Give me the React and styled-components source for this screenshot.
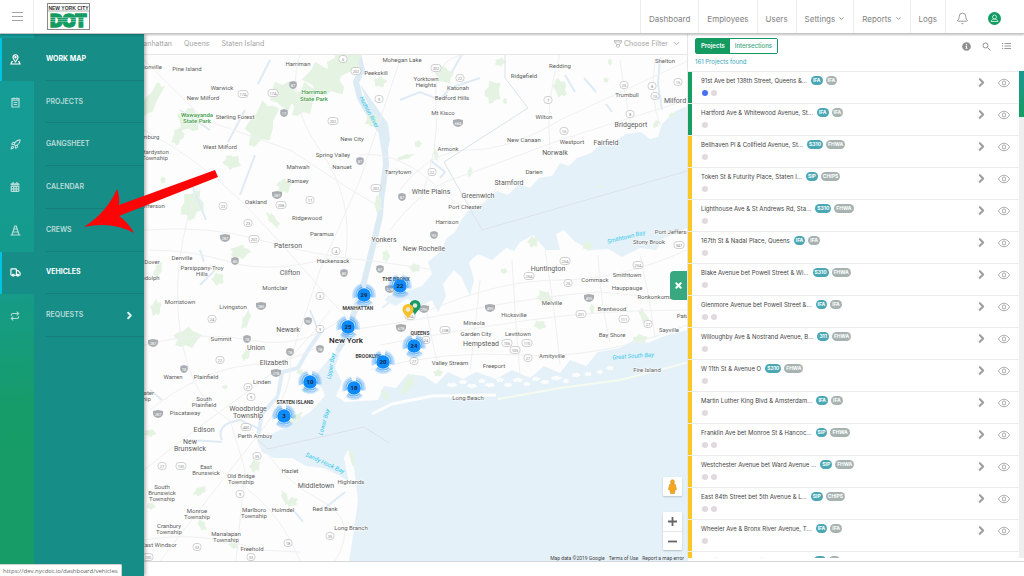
import React, { useState } from 'react';
import styled, { createGlobalStyle } from 'styled-components';
import { Bell, ChevronDown, ChevronRight, Repeat, Rocket, Truck, X } from 'lucide-react';
import { FaCalendarAlt, FaInfoCircle } from 'react-icons/fa';

const GlobalStyle = createGlobalStyle`
  * {
    box-sizing: border-box;
  }
  body {
    margin: 0;
    background: white;
    color: #555;
    font-family: Inter, "Open Sans", sans-serif;
    font-size: 6px;
    line-height: 8px;
  }
  button, select {
    font: inherit;
    color: inherit;
    background: none;
    border: none;
    padding: 0;
    margin: 0;
    cursor: pointer;
  }
  a {
    color: inherit;
    text-decoration: none;
  }
  svg {
    display: block;
  }
`;

const Page = styled.div`
  display: flex;
  flex-direction: column;
  height: 100vh;
  overflow: hidden;
  position: relative;
`;

const Header = styled.header`
  display: flex;
  align-items: stretch;
  flex: 0 0 34px;
  background: white;
  border-bottom: 1px solid #c6c6c6;
  box-shadow: 0 1px 2px rgba(0, 0, 0, 0.25);
  position: relative;
  z-index: 3;
`;

const MenuButton = styled.button`
  display: flex;
  flex-direction: column;
  justify-content: center;
  align-items: center;
  gap: 3px;
  width: 34px;
  padding-left: 2px;
  border-right: 1px solid #ececec;
  span {
    width: 11px;
    height: 1px;
    background: #a5a5a5;
  }
`;

const LogoLink = styled.a`
  padding: 3px 0 0 13px;
  margin-right: auto;
`;

const TopNav = styled.nav`
  display: flex;
  color: #828282;
  font-size: 8px;
`;

const TopNavItem = styled.a`
  display: flex;
  align-items: center;
  justify-content: center;
  gap: 3px;
  padding: 4px 8px 0;
  border-left: 1px solid #ececec;
`;

const HeaderActions = styled.div`
  display: flex;
  align-items: center;
  gap: 19px;
  padding: 4px 23px 0 10px;
  border-left: 1px solid #ececec;
  color: #828282;
`;

const Body = styled.div`
  display: flex;
  flex: 1;
  min-height: 0;
  padding-left: 34px;
  padding-bottom: 14px;
`;

const SideNav = styled.nav`
  position: absolute;
  z-index: 2;
  top: 34px;
  bottom: 0;
  left: 0;
  width: 144px;
  padding-top: 4px;
  background:
    linear-gradient(#168d87, #168d87) 34px 0 no-repeat,
    linear-gradient(175deg, #159c99 0%, #159b8b 45%, #169c68 68%, #179c66 100%);
  box-shadow: 1px 0 4px rgba(0, 0, 0, 0.4);
`;

const SideList = styled.ul`
  display: grid;
  grid-template-rows: repeat(7, 1fr);
  height: 299px;
  margin: 0;
  padding: 0;
  list-style: none;
  li {
    display: grid;
  }
`;

const SideLink = styled.a`
  display: grid;
  grid-template-columns: 32px 1fr;
  border-left: 2px solid ${({ $active }) => ($active ? '#00c3e3' : 'transparent')};
  background: ${({ $active }) => ($active ? '#168d87' : 'none')};
  color: ${({ $active }) => ($active ? 'white' : '#b9dcd9')};
  font-size: 7px;
  font-weight: ${({ $active }) => ($active ? 700 : 600)};
`;

const SideIcon = styled.span`
  display: flex;
  align-items: center;
  padding-left: 8px;
`;

const SideLabel = styled.span`
  display: flex;
  align-items: center;
  justify-content: space-between;
  margin-left: 12px;
  padding-right: 9px;
  border-bottom: 1px solid #147f7b;
`;

const MapColumn = styled.main`
  display: flex;
  flex-direction: column;
  flex: 1;
  min-width: 0;
  border-bottom: 1px solid #d5d8db;
`;

const MapBar = styled.div`
  display: flex;
  align-items: center;
  flex: 0 0 21px;
  gap: 12px;
  padding: 0 6px 1px 103px;
  border-bottom: 1px solid #e6e6e6;
  color: #a3a3a3;
  font-size: 7px;
`;

const Filter = styled.label`
  display: flex;
  align-items: center;
  gap: 2px;
  margin-left: auto;
  select {
    appearance: none;
    width: 46px;
    outline: none;
  }
`;

const MapCanvas = styled.div`
  position: relative;
  flex: 1;
  overflow: hidden;
  background: #fdfdfd;
`;

const MapSvg = styled.svg`
  width: 100%;
  height: 100%;
  font-family: Roboto, sans-serif;
`;

const Cluster = styled.button`
  position: absolute;
  left: ${({ $x }) => $x - 46}px;
  top: ${({ $y }) => $y - 67}px;
  display: grid;
  place-items: center;
  width: 24px;
  height: 24px;
  color: #14233b;
  font-family: Roboto, sans-serif;
  font-size: 6px;
  font-weight: 700;
  svg, span {
    grid-area: 1 / 1;
  }
`;

const Pin = styled.button`
  position: absolute;
  left: ${({ $x }) => $x - 40}px;
  top: ${({ $y }) => $y - 69}px;
  width: 12px;
  height: 15px;
`;

const MapControls = styled.div`
  position: absolute;
  right: 5px;
  bottom: 11px;
  display: flex;
  flex-direction: column;
  gap: 16px;
`;

const ControlGroup = styled.div`
  display: flex;
  flex-direction: column;
  width: 19px;
  background: white;
  border-radius: 1px;
  box-shadow: 0 1px 2px rgba(0, 0, 0, 0.2);
`;

const ControlButton = styled.button`
  display: grid;
  place-items: center;
  height: 19px;
  & + & {
    border-top: 1px solid #e8e8e8;
  }
`;

const Attribution = styled.div`
  position: absolute;
  right: 3px;
  bottom: 0;
  display: flex;
  gap: 4px;
  color: #444;
  font-family: Roboto, sans-serif;
  font-size: 5px;
  line-height: 6px;
`;

const PanelToggle = styled.button`
  position: absolute;
  right: 0;
  top: 216px;
  display: grid;
  place-items: center;
  width: 17px;
  height: 29px;
  border-radius: 4px 0 0 4px;
  background: #37a880;
  color: white;
`;

const Panel = styled.aside`
  display: flex;
  flex-direction: column;
  flex: 0 0 337px;
  min-height: 0;
  padding-bottom: 3px;
  border-left: 1px solid #e6e6e6;
  border-bottom: 1px solid #d5d8db;
`;

const PanelHead = styled.div`
  display: flex;
  justify-content: space-between;
  padding: 4px 13px 0 7px;
`;

const Switch = styled.div`
  display: flex;
  height: 16px;
  border: 1px solid #139b62;
  border-radius: 2px;
`;

const SwitchButton = styled.button`
  padding: 0 5px;
  background: ${({ $on }) => ($on ? '#139b62' : 'white')};
  color: ${({ $on }) => ($on ? 'white' : '#3aa97b')};
  font-weight: ${({ $on }) => ($on ? 600 : 500)};
`;

const PanelTools = styled.div`
  display: flex;
  align-items: center;
  gap: 11px;
  color: #8f8f8f;
`;

const Found = styled.p`
  margin: 4px 0 5px;
  padding-left: 7px;
  color: #35a8bd;
`;

const ListArea = styled.div`
  display: flex;
  flex: 1;
  min-height: 0;
`;

const ProjectList = styled.ul`
  flex: 1;
  margin: 0;
  padding: 0;
  list-style: none;
  overflow: hidden;
  border-top: 1px solid #ebebeb;
`;

const Row = styled.li`
  display: flex;
  align-items: flex-start;
  height: 32px;
  border-bottom: 1px solid #ececec;
  background: linear-gradient(${({ $color }) => $color}, ${({ $color }) => $color}) 0 0 / 4px 31px no-repeat;
`;

const RowMain = styled.div`
  flex: 1;
  padding: 4px 0 0 13px;
`;

const RowTitle = styled.div`
  display: flex;
  align-items: center;
  gap: 3px;
  height: 9px;
  color: #444;
  a {
    margin-right: 1px;
  }
`;

const Tag = styled.span`
  padding: 0 2px;
  border-radius: 5px;
  background: ${({ $grey }) => ($grey ? '#a7b3b0' : '#4ba7b4')};
  color: white;
  font-size: 5px;
  font-weight: 700;
  line-height: 9px;
`;

const Dots = styled.div`
  display: flex;
  gap: 3px;
  padding: 5px 0 0 1px;
`;

const Dot = styled.span`
  width: 6px;
  height: 6px;
  border-radius: 50%;
  background: ${({ $blue }) => ($blue ? '#4673f5' : '#e0d9dd')};
`;

const RowActions = styled.div`
  display: flex;
  align-items: center;
  gap: 10px;
  padding: 4px 9px 0 0;
  color: #a0a0a0;
`;

const ScrollTrack = styled.div`
  width: 5px;
  background: #efefef;
`;

const ScrollThumb = styled.div`
  height: 46px;
  background: linear-gradient(#169a94, #179d62);
`;

const StatusBar = styled.div`
  position: absolute;
  z-index: 4;
  left: 0;
  bottom: 0;
  padding: 2px 3px 1px;
  background: white;
  border: 1px solid #d0d0d0;
  border-width: 1px 1px 0 0;
  border-radius: 0 2px 0 0;
  color: #666;
  font-family: "Open Sans", sans-serif;
  font-size: 6px;
`;

const Arrow = styled.svg`
  position: absolute;
  z-index: 4;
  left: 84px;
  top: 169px;
  pointer-events: none;
`;

const Logo = () => (
  <svg width="44" height="27" viewBox="0 0 44 27" role="img" aria-label="New York City DOT">
    <rect x="0.5" y="0.5" width="42" height="26" fill="#fff" stroke="#8a8a8a" />
    <path d="M1 8H42" stroke="#777" strokeWidth="0.6" />
    <text x="21.5" y="6.500" textAnchor="middle" fontSize="5" fontWeight="700" fill="#333" fontFamily="Liberation Sans Narrow, Liberation Sans, sans-serif">NEW YORK CITY</text>
    <text x="21.5" y="23.500" textAnchor="middle" fontSize="17" fontWeight="900" fill="#139b62" stroke="#139b62" strokeWidth="1.500" fontFamily="Inter, sans-serif">DOT</text>
    <path d="M2 14.5H41M2 16.500H41M2 18.5H41" stroke="#fff" strokeWidth="0.5" opacity="0.7" />
  </svg>
);

const MapPinIcon = () => (
  <svg width="11" height="11" viewBox="0 0 22 22" fill="none" stroke="currentColor" strokeWidth="2.4">
    <path d="M11 16C8 12 6 9 6 6.500a5 5 0 0 1 10 0C16 9 14 12 11 16z" />
    <circle cx="11" cy="6.500" r="1.200" />
    <path d="M6 15H4l-2 5h18l-2-5h-2" />
  </svg>
);

const ClipboardIcon = () => (
  <svg width="11" height="11" viewBox="0 0 22 22" fill="none" stroke="currentColor" strokeWidth="2.4">
    <path d="M4 3h14v17H4zM4 6.500h14M8 1v4M14 1v4M7.500 11h7M7.500 15h7" />
  </svg>
);

const ConeIcon = () => (
  <svg width="11" height="11" viewBox="0 0 22 22" fill="none" stroke="currentColor" strokeWidth="2.4">
    <path d="M1 20h20M4 20L9.500 2h3L18 20M8 8h6M6 14h10" />
  </svg>
);

const UserIcon = () => (
  <svg width="13" height="13" viewBox="0 0 26 26">
    <circle cx="13" cy="13" r="13" fill="#139b62" />
    <g fill="none" stroke="#c9efdd" strokeWidth="1.800">
      <circle cx="13" cy="10" r="4" />
      <path d="M6 19c1-4 4-4.500 7-4.500s6 .5 7 4.500z" />
    </g>
  </svg>
);

const FilterIcon = () => (
  <svg width="8" height="8" viewBox="0 0 16 16" fill="none" stroke="currentColor" strokeWidth="1.300">
    <path d="M1 1h14v3l-4 5v4l-3 2-3-2V9L1 4zM1 4h14M5 9h6" />
  </svg>
);

const SearchIcon = () => (
  <svg width="9" height="9" viewBox="0 0 18 18" fill="none" stroke="currentColor" strokeWidth="2">
    <circle cx="7" cy="7" r="5" />
    <path d="M11 11l6 6" />
  </svg>
);

const ListIcon = () => (
  <svg width="9" height="8" viewBox="0 0 18 16" fill="none" stroke="currentColor" strokeWidth="1.800">
    <path d="M5 3h13M5 8h13M5 13h13M0 3h2.500M0 8h2.500M0 13h2.500" />
  </svg>
);

const EyeIcon = () => (
  <svg width="12" height="10" viewBox="0 0 24 20" fill="none" stroke="currentColor" strokeWidth="1.800">
    <path d="M1 10c5-10 17-10 22 0-5 10-17 10-22 0z" />
    <ellipse cx="12" cy="10" rx="3.200" ry="4.200" />
  </svg>
);

const Pegman = () => (
  <svg width="9" height="15" viewBox="0 0 18 30" fill="#f5a81c" stroke="#c9821a">
    <path d="M3 12c0-2 3-3 6-3s6 1 6 3l2 9-3 1-1 7H5l-1-7-3-1z" />
    <circle cx="9" cy="5.500" r="4" />
  </svg>
);

const PinShape = ({ color }) => (
  <svg width="12" height="15" viewBox="0 0 24 30">
    <path d="M12 30C9 22 1 19 1 11a11 11 0 0 1 22 0c0 8-8 11-11 19z" fill={color} />
    <circle cx="12" cy="11" r="4.500" fill="#e8e8df" />
  </svg>
);

const ClusterRings = () => (
  <svg width="24" height="24" viewBox="-12 -12 24 24">
    <g fill="none" stroke="#2a94f7" strokeWidth="1.600">
      <circle r="8" opacity="0.65" strokeDasharray="13 3.750" strokeDashoffset="-6" />
      <circle r="9.800" opacity="0.4" strokeDasharray="16 4.500" strokeDashoffset="-7" />
      <circle r="11.200" opacity="0.2" strokeDasharray="18 5.450" strokeDashoffset="-8" />
    </g>
    <circle r="6.800" fill="#0d8bfb" />
  </svg>
);

const menu = [
  { label: 'WORK MAP', icon: <MapPinIcon />, active: true },
  { label: 'PROJECTS', icon: <ClipboardIcon /> },
  { label: 'GANGSHEET', icon: <Rocket size={11} strokeWidth={2.5} /> },
  { label: 'CALENDAR', icon: <FaCalendarAlt size={10} /> },
  { label: 'CREWS', icon: <ConeIcon /> },
  { label: 'VEHICLES', icon: <Truck size={11} strokeWidth={2.5} />, active: true },
  { label: 'REQUESTS', icon: <Repeat size={10} strokeWidth={2.5} />, more: true },
];

const GREEN = '#179c62';
const YELLOW = '#fcc624';

const projects = [
  ['91st Ave bet 138th Street, Queens &...', 'IFA', 'IFA', 2],
  ['Hartford Ave & Whitewood Avenue, St...', 'IFA', 'IFA', 1],
  ['Bellhaven Pl & Collfield Avenue, St...', 'S310', 'FHWA', 1],
  ['Token St & Futurity Place, Staten I...', 'SIP', 'CHIPS', 1],
  ['Lighthouse Ave & St Andrews Rd, Sta...', 'S310', 'FHWA', 1],
  ['167th St & Nadal Place, Queens', 'IFA', 'IFA', 1],
  ['Blake Avenue bet Powell Street & Wi...', 'S310', 'FHWA', 1],
  ['Glenmore Avenue bet Powell Street &...', 'IFA', 'IFA', 2],
  ['Willoughby Ave & Nostrand Avenue, B...', '311', 'FHWA', 1],
  ['W 11th St & Avenue O', 'S310', 'FHWA', 1],
  ['Martin Luther King Blvd & Amsterdam...', 'IFA', 'IFA', 1],
  ['Franklin Ave bet Monroe St & Hancoc...', 'SIP', 'FHWA', 2],
  ['Westchester Avenue bet Ward Avenue ...', 'SIP', 'FHWA', 2],
  ['East 84th Street bet 5th Avenue & L...', 'SIP', 'CHIPS', 2],
  ['Wheeler Ave & Bronx River Avenue, T...', 'IFA', 'IFA', 1],
  ['Morris Park Ave & Unionport Road, B...', 'IFA', 'IFA', 1],
];

const clusters = [
  [364, 295, 29], [400, 286, 22], [348, 327, 25], [414, 346, 24],
  [383, 362, 20], [354, 388, 18], [310, 382, 10], [284, 416, 3],
];

// x, y of the middle of the first line, then the lines
const towns = [
  [187, 69, 'Pine Island'], [298, 64, 'Harriman'], [222, 88, 'Warwick'], [203, 98, 'New Milford'],
  [235, 117, 'Sterling Forest'], [220, 147, 'West Milford'], [333, 155, 'Spring Valley'],
  [298, 167, 'Mahwah'], [342, 167, 'Nanuet'], [298, 181, 'Ramsey'], [256, 202, 'Oakland'],
  [307, 218, 'Ridgewood'], [322, 234, 'Paramus'], [333, 261, 'Hackensack'], [275, 288, 'Montclair'],
  [182, 258, 'Denville'], [152, 262, 'Dover'], [202, 268, 'Parsippany-Troy', 'Hills'],
  [180, 302, 'Morristown'], [233, 307, 'Livingston'], [221, 339, 'Summit'], [173, 377, 'Warren'],
  [206, 377, 'Plainfield'], [262, 382, 'Linden'], [204, 399, 'South', 'Plainfield'],
  [185, 413, 'Piscataway'], [255, 436, 'Perth Amboy'], [206, 467, 'East', 'Brunswick'],
  [241, 476, 'Old Bridge', 'Township'], [290, 471, 'Hazlet'], [162, 487, 'South', 'Brunswick', 'Township'],
  [197, 511, 'Monroe', 'Township'], [254, 510, 'Marlboro', 'Township'], [283, 510, 'Holmdel'],
  [325, 509, 'Red Bank'], [169, 526, 'Cranbury', 'Township'], [159, 545, 'East Windsor'],
  [226, 534, 'Manalapan', 'Township'], [252, 549, 'Freehold'], [351, 482, 'Highlands'],
  [351, 528, 'Long Branch'], [402, 60, 'Mohegan Lake'], [376, 73, 'Peekskill'],
  [426, 79, 'Yorktown', 'Heights'], [458, 88, 'Katonah'], [452, 98, 'Bedford Hills'],
  [443, 113, 'Mt Kisco'], [560, 66, 'Redding'], [524, 76, 'Ridgefield'], [665, 61, 'Shelton'],
  [627, 95, 'Trumbull'], [544, 117, 'Wilton'], [352, 139, 'New City'], [524, 140, 'New Canaan'],
  [572, 142, 'Westport'], [448, 149, 'Armonk'], [398, 172, 'Tarrytown'], [534, 172, 'Darien'],
  [465, 207, 'Port Chester'], [447, 222, 'Harrison'], [595, 280, 'Commack'], [627, 275, 'Smithtown'],
  [649, 242, 'Stony Brook'], [674, 232, 'Port Jefferson'], [627, 288, 'Hauppauge'],
  [655, 297, 'Ronkonkoma'], [612, 309, 'Brentwood'], [552, 303, 'Melville'], [514, 315, 'Hicksville'],
  [474, 323, 'Mineola'], [476, 334, 'Garden City'], [518, 334, 'Levittown'], [669, 330, 'Sayville'],
  [612, 335, 'Bay Shore'], [552, 356, 'Amityville'], [450, 363, 'Valley Stream'],
  [494, 366, 'Freeport'], [647, 370, 'Fire Island'], [468, 398, 'Long Beach'],
  [691, 316, 'Patchogue'], [149, 67, 'Unionville'], [147, 137, 'Hamburg'], [155, 152, 'Hardyston', 'Township'],
  [152, 206, 'Jefferson'], [147, 278, 'Randolph'], [138, 393, 'Bridgewater', 'Township'],
  [224, 53, 'Florida'], [282, 53, 'Monroe'],
];

const cities = [
  [288, 246, 'Paterson'], [290, 273, 'Clifton'], [288, 330, 'Newark'], [256, 348, 'Union'],
  [274, 363, 'Elizabeth'], [248, 409, 'Woodbridge', 'Township'], [204, 430, 'Edison'],
  [190, 442, 'New', 'Brunswick'], [316, 486, 'Middletown'], [675, 101, 'Milford'],
  [631, 125, 'Bridgeport'], [606, 143, 'Fairfield'], [555, 153, 'Norwalk'], [431, 192, 'White Plains'],
  [509, 183, 'Stamford'], [478, 196, 'Greenwich'], [384, 240, 'Yonkers'], [424, 249, 'New Rochelle'],
  [548, 269, 'Huntington'], [481, 344, 'Hempstead'],
];

const boroughs = [
  [295, 402, 'STATEN ISLAND'], [358, 308, 'MANHATTAN'], [396, 279, 'THE BRONX'],
  [420, 333, 'QUEENS'], [368, 356, 'BROOKLYN'],
];

// x, y, angle
const waterNames = [
  [369, 112, 62, 'Hudson River'], [626, 237, -14, 'Smithtown Bay'], [633, 356, -4, 'Great South Bay'],
  [331, 366, -80, 'Upper Bay'], [324, 422, -74, 'Lower Bay'], [325, 463, 25, 'Sandy Hook Bay'],
];

const routes = [
  [243, 94, '17A'], [273, 93, '17A'], [333, 121, '202'], [223, 206, '23'], [281, 205, '208'],
  [310, 200, '17'], [248, 223, '23'], [254, 239, '202'], [336, 251, '4'], [320, 296, '3'],
  [212, 319, '24'], [320, 329, '9'], [220, 360, '22'], [248, 387, '27'], [251, 397, '9'],
  [246, 427, '440'], [257, 456, '35'], [162, 466, '27'], [181, 466, '130'], [240, 494, '9'],
  [330, 536, '35'], [288, 543, '18'], [197, 547, '33'], [251, 557, '33'], [148, 557, '130'],
  [343, 59, '6'], [356, 71, '202'], [436, 68, '202'], [460, 78, '22'], [379, 99, '9'],
  [548, 100, '7'], [564, 131, '15'], [624, 85, '25'], [652, 86, '8'], [678, 82, '15'],
  [655, 96, '15'], [630, 114, '8'], [432, 172, '22'], [376, 188, '202'], [679, 245, '347'],
  [565, 261, '25A'], [638, 265, '25A'], [529, 276, '25A'], [568, 283, '25'], [581, 314, '231'],
  [624, 319, '111'], [648, 324, '27'], [445, 330, '25B'], [507, 343, '106'], [527, 343, '110'],
  [515, 350, '105'], [528, 358, '27'], [426, 340, '24'], [414, 361, '27'], [410, 316, '25A'],
];

const interstates = [
  [293, 85, '87'], [284, 113, '17'], [277, 195, '287'], [225, 238, '287'], [235, 261, '80'],
  [261, 306, '280'], [247, 339, '78'], [308, 321, '95'], [290, 352, '78'], [320, 349, '78'],
  [184, 369, '78'], [276, 373, '278'], [153, 343, '287'], [158, 414, '287'], [458, 123, '684'],
  [360, 161, '87'], [402, 197, '87'], [434, 235, '95'], [380, 269, '87'], [344, 273, '80'],
  [390, 289, '278'], [424, 309, '295'], [490, 308, '495'], [589, 298, '495'], [401, 328, '678'],
];

// x, y, width, height, angle
const parks = [
  [325, 80, 48, 34, 20], [345, 62, 40, 30, -20], [262, 124, 30, 54, 25], [285, 95, 34, 30, 30],
  [304, 100, 26, 40, 30], [190, 120, 28, 26, 0], [152, 100, 14, 46, 30], [178, 136, 12, 22, 20],
  [232, 162, 20, 16, 0], [192, 205, 24, 34, 20], [273, 220, 22, 8, 50], [240, 252, 22, 15, 0],
  [218, 279, 14, 14, 0], [187, 338, 30, 22, -10], [156, 308, 12, 18, 10], [158, 270, 8, 20, 20],
  [246, 320, 8, 22, 20], [246, 355, 8, 14, 30], [284, 186, 16, 16, 10], [150, 433, 14, 8, 0],
  [200, 491, 16, 9, -30], [151, 506, 10, 8, 0], [202, 525, 14, 8, 60], [255, 466, 12, 14, 20],
  [285, 498, 6, 18, -20], [234, 545, 12, 8, 20], [292, 502, 10, 14, 60], [493, 92, 18, 26, 10],
  [560, 88, 14, 22, -20], [500, 62, 12, 9, -20], [380, 82, 14, 12, 0], [444, 75, 22, 18, 30],
  [418, 144, 8, 8, 0], [372, 120, 14, 16, 50], [405, 157, 20, 5, -15], [378, 204, 8, 20, 0],
  [386, 256, 8, 14, 0], [415, 268, 12, 10, 0], [436, 155, 5, 14, -10], [533, 242, 12, 12, 0],
  [588, 246, 12, 10, 0], [545, 298, 20, 14, 50], [540, 325, 14, 10, 10], [592, 309, 5, 12, 0],
  [644, 317, 8, 22, -25], [640, 339, 16, 10, 0], [504, 271, 8, 6, 0], [408, 385, 10, 26, 30],
  [385, 395, 6, 16, -25], [438, 373, 10, 8, 0], [305, 389, 8, 8, 0], [296, 418, 18, 7, -40],
  [300, 372, 8, 6, 0], [352, 458, 5, 22, -15], [610, 62, 5, 8, 0], [606, 80, 6, 6, 0],
  [656, 124, 10, 6, -60], [672, 115, 8, 5, -30], [505, 101, 5, 7, 0], [600, 187, 6, 4, 0],
  [470, 172, 5, 12, 10], [225, 387, 7, 5, 0], [163, 180, 6, 8, 0],
];

// marsh islands behind the barrier beach
const islets = [
  [452, 385, 12], [463, 382, 9], [472, 386, 12], [482, 381, 8], [490, 385, 12], [500, 380, 9],
  [508, 385, 10], [518, 380, 12], [527, 384, 8], [536, 379, 9], [545, 382, 10], [556, 378, 12],
  [566, 381, 7], [576, 375, 10], [588, 374, 8], [600, 372, 7], [610, 368, 8],
];

const roads = [
  'M144 60L205 120 290 150 345 186 383 209',
  'M144 130Q200 160 240 200T330 300L360 330',
  'M144 230Q210 225 260 240T380 262L435 270',
  'M150 250Q190 250 230 262T330 258',
  'M144 345Q200 330 250 340T340 320',
  'M150 410Q200 370 250 365T320 345',
  'M144 470Q200 425 250 390T330 310',
  'M160 561Q230 470 262 430T290 360L320 270 360 180 400 60',
  'M300 54Q285 100 320 150T345 260',
  'M220 470Q270 500 290 540T300 561',
  'M260 440Q280 480 320 500T335 561',
  'M144 540Q200 530 260 550L300 552',
  'M390 230Q420 190 450 180T560 140L687 100',
  'M400 190Q430 150 470 150T560 120L690 60',
  'M360 155Q400 150 440 190T500 180',
  'M420 200Q440 150 436 100T480 54',
  'M350 330Q420 320 480 308T600 292L687 300',
  'M380 345Q460 330 530 320T687 310',
  'M370 370Q440 350 520 355T687 325',
  'M430 310Q500 280 560 280T687 250',
  'M440 370Q430 340 424 290',
  'M470 370Q475 330 480 280M520 375Q515 320 512 260M560 365Q555 310 545 250M610 342Q600 300 598 255M655 338Q650 300 640 255',
  'M560 54Q545 100 550 150M620 60Q625 100 632 128M655 60Q650 100 660 125',
  'M200 180Q170 260 180 330T230 420L245 470 236 561',
];

const streams = [
  'M270 60L258 84M245 110L228 142M255 155L240 195M210 130L180 110M200 250L204 262M206 220L190 180',
  'M400 100L420 92 440 100 450 88 480 78M430 160L445 172 440 178M462 54L452 72',
  'M565 75L575 92M584 78L596 92M660 58L658 84 662 110M606 104L612 112',
  'M222 440Q215 424 240 420L262 430M190 440L222 442M200 285L215 270M162 400L150 390',
  'M325 508L345 492M303 522L295 512M310 310L318 330',
];

const textLines = ([x, y, ...lines], step) =>
  lines.map((line, i) => <text key={line + i} x={x} y={y + 2 + i * step}>{line}</text>);

// uneven outline, so that a park does not look like an ellipse
const blobPoints = (w, h, seed) =>
  Array.from({ length: 14 }, (_, i) => {
    const a = (i / 14) * Math.PI * 2;
    const k = 0.42 + 0.1 * Math.sin(seed * 3 + i * 2.3);
    return `${(Math.cos(a) * w * k).toFixed(1)},${(Math.sin(a) * h * k).toFixed(1)}`;
  }).join(' ');

const RegionMap = () => (
  <MapSvg role="img" aria-label="Map of New York and surroundings">
    <g transform="translate(-34 -55)">
      <path d="M1400 106H687L674 112 662 124 658 137 650 139 641 132 626 134 614 142 601 144 591 153 577 158 569 166 560 163 552 176 539 178 530 188 519 184 508 195 497 191 483 203 471 207 462 219 455 232 447 238 440 252 428 262 432 274 422 286 404 292 388 296 370 318 352 338 338 350 328 360 318 372 312 384 322 388 325 396 310 412 292 424 268 436 256 438 262 452 274 458 292 458 306 466 324 468 340 476 349 482 344 458 348 450 354 468 358 500 354 530 349 561V1200H1400Z" fill="#e4f1f9" />
      <path d="M358 54L362 70 356 82 360 98 374 122 384 134 386 165 381 200 380 216 372 250 362 290 348 330 338 352" fill="none" stroke="#dceaf4" strokeWidth="6" />
      <path d="M360 84Q372 100 388 124L390 140 384 165 378 130Z" fill="#deecf6" />
      <path d="M322 330L308 350 298 368 282 372 278 396 262 414 258 436" fill="none" stroke="#e0edf6" strokeWidth="4" />
      <g fill="#fdfdfd">
        <path d="M340 352L352 334 368 312 384 300 396 306 408 298 420 306 432 300 438 312 446 296 443 284 454 270 462 278 470 296 474 280 469 262 478 254 492 260 506 248 514 251 520 242 533 235 546 250 560 250 556 234 564 230 574 241 590 250 608 249 622 257 640 248 656 250 664 238 687 228H1400V320H700L687 330 664 336 648 343 636 339 620 348 598 352 586 366 570 360 560 373 544 366 530 378 512 370 496 379 476 372 463 379 448 372 436 384 424 376 408 374 396 388 384 386 378 400 345 402 336 396 342 382 335 368Z" />
        <path d="M284 380L300 376 318 384 324 392 310 408 292 422 268 434 278 400Z" />
        {islets.map(([x, y, w], i) => (
          <polygon key={x} points={blobPoints(w, 5, i)} transform={`translate(${x} ${y})`} />
        ))}
      </g>
      <path d="M372 414L392 404 432 396 496 395" fill="none" stroke="#fdfdfd" strokeWidth="3" />
      <path d="M498 399L560 388 620 380 690 362" fill="none" stroke="#f6faef" strokeWidth="2" />
      <path d="M382 308L400 294 412 300" fill="none" stroke="#e4f1f9" strokeWidth="2" />
      <g fill="#e5f4e2">
        {parks.map(([x, y, w, h, angle], i) => (
          <polygon key={i} points={blobPoints(w, h, i)} transform={`translate(${x} ${y}) rotate(${angle})`} />
        ))}
      </g>
      <g fill="none" stroke="#deebf6" strokeWidth="2">
        {streams.map((d) => <path key={d} d={d} />)}
      </g>
      <g fill="none" stroke="#eff0f2">
        {roads.map((d) => <path key={d} d={d} />)}
      </g>
      <path d="M505 54V78L528 108 444 162 482 230 687 171M258 440L268 449 364 427 389 443" fill="none" stroke="#dde2e7" />
      <g textAnchor="middle" fontSize="4" fill="#8b8b8b">
        {routes.map(([x, y, name]) => (
          <g key={`${x}-${y}`} transform={`translate(${x} ${y})`}>
            <rect x={name.length > 2 ? -5 : -4} y="-3.500" width={name.length > 2 ? 10 : 8} height="7" rx="3" fill="#fff" stroke="#c4c4c4" strokeWidth="0.800" />
            <text y="1.500">{name}</text>
          </g>
        ))}
      </g>
      <g textAnchor="middle" fontSize="4" fill="#fff">
        {interstates.map(([x, y, name]) => (
          <g key={`${x}-${y}`} transform={`translate(${x} ${y})`}>
            <path d={name.length > 2 ? 'M-5-3L0-4 5-3Q6 3 0 4-6 3-5-3z' : 'M-3.500-3L0-4 3.500-3Q5 3 0 4-5 3-3.500-3z'} fill="#a9adb1" />
            <text y="1.500">{name}</text>
          </g>
        ))}
      </g>
      <g textAnchor="middle" fill="#5c5c5c" stroke="#fff" strokeWidth="1" paintOrder="stroke" strokeLinejoin="round">
        <g fontSize="6">{towns.map((t) => textLines(t, 6))}</g>
        <g fontSize="7">{cities.map((t) => textLines(t, 7))}</g>
        <g fontSize="5" fontWeight="700" fill="#444">{boroughs.map((t) => textLines(t, 6))}</g>
        <g fontSize="8" fontWeight="500" fill="#222">{textLines([346, 341, 'New York'], 8)}</g>
        <g fontSize="6" fontWeight="500" fill="#3d9b45">
          {textLines([314, 92, 'Harriman', 'State Park'], 7)}
          {textLines([197, 115, 'Wawayanda', 'State Park'], 6)}
        </g>
      </g>
      <g textAnchor="middle" fontSize="6" fontStyle="italic" fill="#32c8ea">
        {waterNames.map(([x, y, angle, name]) => (
          <text key={name} y="2" transform={`translate(${x} ${y}) rotate(${angle})`}>{name}</text>
        ))}
      </g>
    </g>
  </MapSvg>
);

const SideMenu = () => (
  <SideNav aria-label="Main">
    <SideList>
      {menu.map(({ label, icon, active, more }) => (
        <li key={label}>
          <SideLink href="#" $active={active}>
            <SideIcon>{icon}</SideIcon>
            <SideLabel>
              {label}
              {more && <ChevronRight size={11} strokeWidth={4} color="#e4f3f2" />}
            </SideLabel>
          </SideLink>
        </li>
      ))}
    </SideList>
  </SideNav>
);

const Project = ({ project: [name, type, fund, dots], first, color }) => (
  <Row $color={color}>
    <RowMain>
      <RowTitle>
        <a href="#">{name}</a>
        <Tag>{type}</Tag>
        <Tag $grey>{fund}</Tag>
      </RowTitle>
      <Dots>
        {Array.from({ length: dots }, (_, i) => <Dot key={i} $blue={first && i === 0} />)}
      </Dots>
    </RowMain>
    <RowActions>
      <button type="button" aria-label="Open project"><ChevronRight size={13} strokeWidth={4} /></button>
      <button type="button" aria-label="Show on map"><EyeIcon /></button>
    </RowActions>
  </Row>
);

const App = () => {
  const [tab, setTab] = useState('Projects');

  return (
    <Page>
      <GlobalStyle />
      <Header>
        <MenuButton aria-label="Menu">
          <span />
          <span />
          <span />
        </MenuButton>
        <LogoLink href="#"><Logo /></LogoLink>
        <TopNav>
          <TopNavItem href="#">Dashboard</TopNavItem>
          <TopNavItem href="#">Employees</TopNavItem>
          <TopNavItem href="#">Users</TopNavItem>
          <TopNavItem as="button">Settings <ChevronDown size={7} strokeWidth={3} /></TopNavItem>
          <TopNavItem as="button">Reports <ChevronDown size={7} strokeWidth={3} /></TopNavItem>
          <TopNavItem href="#">Logs</TopNavItem>
        </TopNav>
        <HeaderActions>
          <button type="button" aria-label="Notifications"><Bell size={13} strokeWidth={1.5} /></button>
          <button type="button" aria-label="Account"><UserIcon /></button>
        </HeaderActions>
      </Header>
      <SideMenu />
      <Body>
        <MapColumn>
          <MapBar>
            <a href="#">Manhattan</a>
            <a href="#">Queens</a>
            <a href="#">Staten Island</a>
            <Filter>
              <FilterIcon />
              <select aria-label="Filter"><option>Choose Filter</option></select>
              <ChevronDown size={9} strokeWidth={2.5} />
            </Filter>
          </MapBar>
          <MapCanvas>
            <RegionMap />
            {clusters.map(([x, y, count]) => (
              <Cluster key={count} $x={x} $y={y}>
                <ClusterRings />
                <span>{count}</span>
              </Cluster>
            ))}
            <Pin $x={415} $y={314} aria-label="Green project"><PinShape color="#159a62" /></Pin>
            <Pin $x={408} $y={318} aria-label="Yellow project"><PinShape color="#f7c12a" /></Pin>
            <PanelToggle aria-label="Close panel"><X size={9} strokeWidth={5} /></PanelToggle>
            <MapControls>
              <ControlGroup>
                <ControlButton aria-label="Street view"><Pegman /></ControlButton>
              </ControlGroup>
              <ControlGroup>
                <ControlButton aria-label="Zoom in">
                  <svg width="9" height="9" viewBox="0 0 9 9"><path d="M0 4.500H9M4.500 0V9" stroke="#666" strokeWidth="1.800" /></svg>
                </ControlButton>
                <ControlButton aria-label="Zoom out">
                  <svg width="9" height="9" viewBox="0 0 9 9"><path d="M0 4.500H9" stroke="#666" strokeWidth="1.800" /></svg>
                </ControlButton>
              </ControlGroup>
            </MapControls>
            <Attribution>
              <span>Map data ©2019 Google</span>
              <a href="#">Terms of Use</a>
              <a href="#">Report a map error</a>
            </Attribution>
          </MapCanvas>
        </MapColumn>
        <Panel>
          <PanelHead>
            <Switch>
              {['Projects', 'Intersections'].map((name) => (
                <SwitchButton key={name} $on={tab === name} onClick={() => setTab(name)}>{name}</SwitchButton>
              ))}
            </Switch>
            <PanelTools>
              <button type="button" aria-label="Info"><FaInfoCircle size={9} /></button>
              <button type="button" aria-label="Search"><SearchIcon /></button>
              <button type="button" aria-label="List"><ListIcon /></button>
            </PanelTools>
          </PanelHead>
          <Found>161 Projects found</Found>
          <ListArea>
            <ProjectList>
              {projects.map((project, i) => (
                <Project key={project[0]} project={project} first={i === 0} color={i < 2 ? GREEN : YELLOW} />
              ))}
            </ProjectList>
            <ScrollTrack><ScrollThumb /></ScrollTrack>
          </ListArea>
        </Panel>
      </Body>
      <Arrow width="135" height="66" viewBox="84 169 135 66">
        <path d="M215 170L119 205Q120 197 117 189 107 212 84 227 112 221 134 233 128 222 119 216L218 177Z" fill="#fb0507" />
      </Arrow>
      <StatusBar>https://dev.nycdot.io/dashboard/vehicles</StatusBar>
    </Page>
  );
};

export default App;
